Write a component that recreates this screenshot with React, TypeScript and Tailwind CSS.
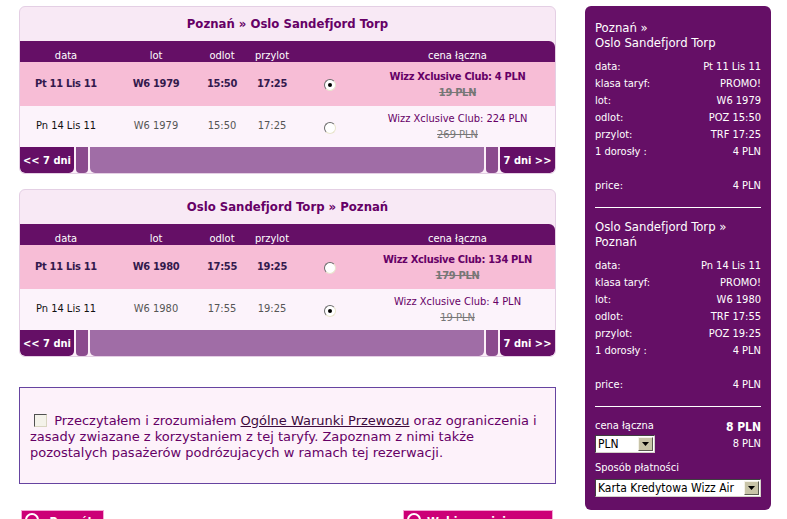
import React from 'react';

type FlightRow = {
  date: string;
  lot: string;
  dep: string;
  arr: string;
  price: string;
  old: string;
  checked: boolean;
};

type Leg = {
  title: string;
  rows: FlightRow[];
};

type Summary = {
  from: string;
  to: string;
  date: string;
  lot: string;
  dep: string;
  arr: string;
};

const legs: Leg[] = [
  {
    title: 'Poznań » Oslo Sandefjord Torp',
    rows: [
      { date: 'Pt 11 Lis 11', lot: 'W6 1979', dep: '15:50', arr: '17:25', price: 'Wizz Xclusive Club: 4 PLN', old: '19 PLN', checked: true },
      { date: 'Pn 14 Lis 11', lot: 'W6 1979', dep: '15:50', arr: '17:25', price: 'Wizz Xclusive Club: 224 PLN', old: '269 PLN', checked: false },
    ],
  },
  {
    title: 'Oslo Sandefjord Torp » Poznań',
    rows: [
      { date: 'Pt 11 Lis 11', lot: 'W6 1980', dep: '17:55', arr: '19:25', price: 'Wizz Xclusive Club: 134 PLN', old: '179 PLN', checked: false },
      { date: 'Pn 14 Lis 11', lot: 'W6 1980', dep: '17:55', arr: '19:25', price: 'Wizz Xclusive Club: 4 PLN', old: '19 PLN', checked: true },
    ],
  },
];

const summaries: Summary[] = [
  { from: 'Poznań »', to: 'Oslo Sandefjord Torp', date: 'Pt 11 Lis 11', lot: 'W6 1979', dep: 'POZ 15:50', arr: 'TRF 17:25' },
  { from: 'Oslo Sandefjord Torp »', to: 'Poznań', date: 'Pn 14 Lis 11', lot: 'W6 1980', dep: 'TRF 17:55', arr: 'POZ 19:25' },
];

const cols = 'grid grid-cols-[92px_88px_44px_56px_60px_1fr] items-center text-center';

const Radio: React.FC<{ checked: boolean }> = ({ checked }) => (
  <span className="inline-flex h-[12px] w-[12px] items-center justify-center rounded-full border border-t-[#6b6b6b] border-l-[#6b6b6b] border-b-[#e8e4cc] border-r-[#e8e4cc] bg-white">
    {checked && <span className="h-[4px] w-[4px] rounded-full bg-black" />}
  </span>
);

const LegTable: React.FC<{ leg: Leg }> = ({ leg }) => (
  <div className="overflow-hidden rounded-[6px] border border-[#e4cfe4] bg-[#f8e9f5]">
    <div className="flex h-[34px] items-center justify-center text-[13px] font-bold text-[#660066]">{leg.title}</div>
    <div className={`${cols} h-[21px] rounded-tr-[6px] bg-[#650f66] pt-[7px] text-[11px] text-white`}>
      <span>data</span>
      <span>lot</span>
      <span>odlot</span>
      <span>przylot</span>
      <span />
      <span>cena łączna</span>
    </div>
    {leg.rows.map((r, i) => {
      const first = i === 0;
      return (
        <div
          key={r.date}
          className={`${cols} text-[11px] ${first ? 'h-[44px] bg-[#f7bdd6] font-bold tracking-[-0.3px] text-[#331a4d]' : 'h-[41px] bg-[#fcf3fb] text-[#555]'}`}
        >
          <span className={first ? '' : 'text-[#111]'}>{r.date}</span>
          <span>{r.lot}</span>
          <span>{r.dep}</span>
          <span>{r.arr}</span>
          <span className="flex justify-center pt-[2px]">
            <Radio checked={r.checked} />
          </span>
          <span className="flex flex-col pt-[1px] leading-[16px]">
            <span className="text-[#660066]">{r.price}</span>
            <span className="text-[#777] line-through">{r.old}</span>
          </span>
        </div>
      );
    })}
    <div className="flex h-[26px] gap-[2px] bg-[#fbeef8] text-[11px] font-bold text-white">
      <span className="flex w-[54px] items-center justify-center rounded-b-[5px] bg-[#650f66] pt-[3px]">&lt;&lt; 7 dni</span>
      <span className="w-[12px] rounded-b-[4px] bg-[#8b4b8e]" />
      <span className="flex-1 rounded-b-[5px] bg-[#a06da6]" />
      <span className="w-[12px] rounded-b-[4px] bg-[#8b4b8e]" />
      <span className="flex w-[55px] items-center justify-center rounded-b-[5px] bg-[#650f66] pt-[3px]">7 dni &gt;&gt;</span>
    </div>
  </div>
);

const Line: React.FC<{ label: string; value: string; bold?: boolean }> = ({ label, value, bold }) => (
  <div className="flex h-[17px] items-center justify-between">
    <span>{label}</span>
    <span className={bold ? 'text-[12px] font-bold' : ''}>{value}</span>
  </div>
);

const SelectBox: React.FC<{ value: string; className: string }> = ({ value, className }) => (
  <div className={`flex h-[18px] items-stretch border border-t-[#404040] border-l-[#404040] border-b-[#d4d0c8] border-r-[#d4d0c8] bg-white ${className}`}>
    <span className="flex flex-1 items-center pl-[2px] text-[12px] leading-none text-black">{value}</span>
    <span className="m-[1px] flex w-[15px] items-center justify-center border border-t-[#f4f2e8] border-l-[#f4f2e8] border-b-[#5a5a50] border-r-[#5a5a50] bg-[#c8c4a8]">
      <svg width="7" height="4" viewBox="0 0 7 4">
        <path d="M0 0h7L3.5 4z" fill="#000" />
      </svg>
    </span>
  </div>
);

const SummaryBlock: React.FC<{ s: Summary }> = ({ s }) => (
  <div>
    <div className="text-[13px] leading-[15px]">
      <div>{s.from}</div>
      <div>{s.to}</div>
    </div>
    <div className="mt-[9px] text-[11px]">
      <Line label="data:" value={s.date} />
      <Line label="klasa taryf:" value="PROMO!" />
      <Line label="lot:" value={s.lot} />
      <Line label="odlot:" value={s.dep} />
      <Line label="przylot:" value={s.arr} />
      <Line label="1 dorosły :" value="4 PLN" />
      <div className="h-[17px]" />
      <Line label="price:" value="4 PLN" />
    </div>
    <div className="mt-[12px] mb-[11px] h-px bg-white" />
  </div>
);

const App: React.FC = () => {
  return (
    <div className="flex h-[519px] gap-[29px] overflow-hidden bg-white pt-[6px] pl-[19px] font-['DejaVu_Sans_Condensed','DejaVu_Sans',sans-serif]">
      <div className="flex w-[537px] flex-col">
        <div className="flex flex-col gap-[15px]">
          {legs.map(leg => (
            <LegTable key={leg.title} leg={leg} />
          ))}
        </div>

        <div className="mt-[30px] border border-[#6644a0] bg-[#fdf2fa] pt-[25px] pr-[8px] pb-[22px] pl-[10px] font-['DejaVu_Sans',sans-serif] text-[13px] leading-[16px] text-[#660066]">
          <p>
            <input
              type="checkbox"
              className="mt-0 mr-[3px] mb-0 ml-[4px] h-[13px] w-[13px] appearance-none border border-t-[#505050] border-l-[#505050] border-b-[#d8d4c0] border-r-[#d8d4c0] bg-[#f4f2ea] align-[-2px]"
            />{' '}
            Przeczytałem i zrozumiałem{' '}
            <a className="text-[#3d0a3d] underline">Ogólne Warunki Przewozu</a> oraz ograniczenia i
            <br />
            zasady zwiazane z korzystaniem z tej taryfy. Zapoznam z nimi także
            <br />
            pozostalych pasażerów podrózujacych w ramach tej rezerwacji.
          </p>
        </div>

        <div className="mt-[26px] flex justify-between pr-[3px] pl-[2px] text-[12px] font-bold text-white">
          <button className="flex h-[24px] w-[83px] items-start gap-[6px] border border-[#f4a6d4] bg-[#cc0077] px-[3px] pt-[2px]">
            <span className="h-[14px] w-[14px] rounded-full border-2 border-white" />
            <span>‹Powrót</span>
          </button>
          <button className="flex h-[24px] w-[150px] items-start gap-[6px] border border-[#f4a6d4] bg-[#cc0077] px-[3px] pt-[2px]">
            <span className="h-[14px] w-[14px] rounded-full border-2 border-white" />
            <span>Wybierz miejsca</span>
          </button>
        </div>
      </div>

      <aside className="h-[504px] w-[186px] rounded-[6px] bg-[#650f66] px-[10px] pt-[14px] text-white">
        {summaries.map(s => (
          <SummaryBlock key={s.from} s={s} />
        ))}
        <div className="text-[11px]">
          <Line label="cena łączna" value="8 PLN" bold />
          <div className="flex items-start justify-between">
            <SelectBox value="PLN" className="w-[60px]" />
            <span className="pt-[1px]">8 PLN</span>
          </div>
          <div className="mt-[7px] flex h-[17px] items-center">Sposób płatności</div>
          <SelectBox value="Karta Kredytowa Wizz Air" className="mt-[2px] w-[166px]" />
        </div>
      </aside>
    </div>
  );
};

export default App;
